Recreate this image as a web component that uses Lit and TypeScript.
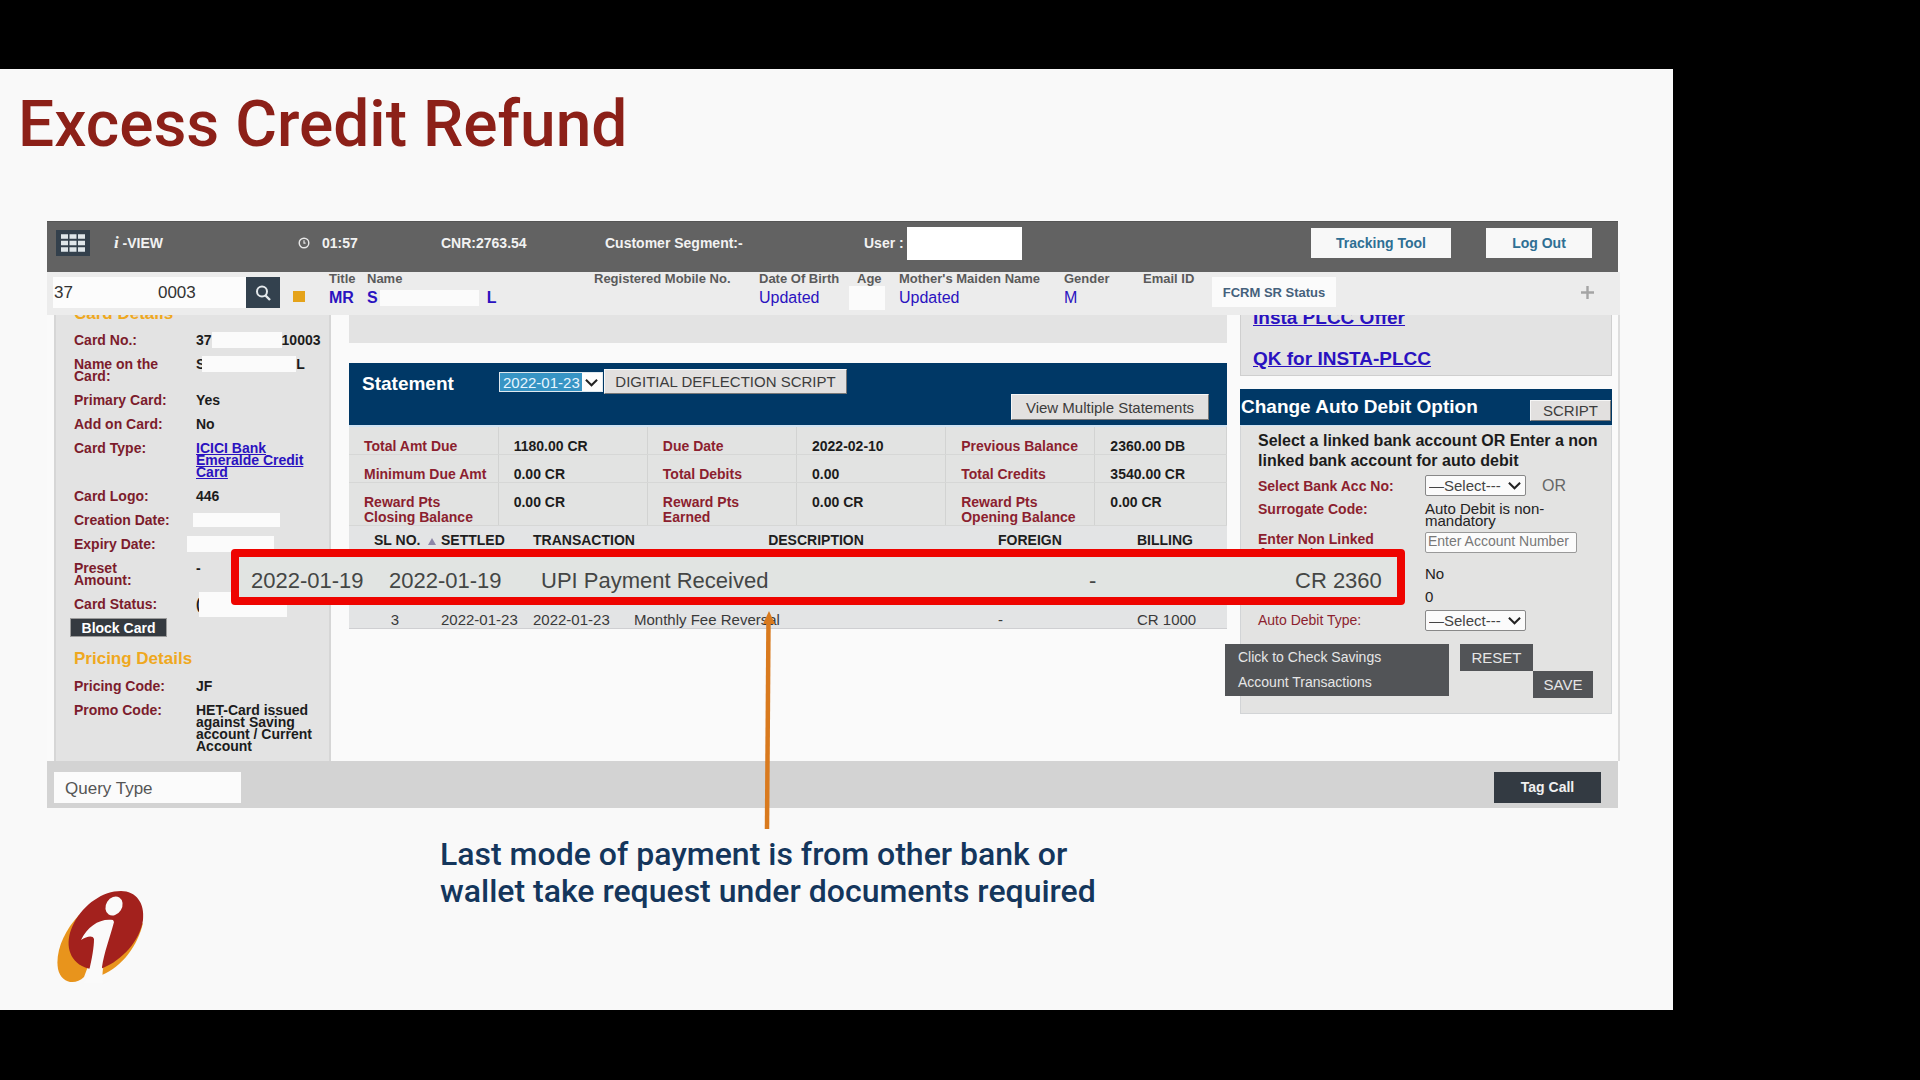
import { LitElement, html, css, nothing } from "lit";
import { customElement } from "lit/decorators.js";

const chevron = html`<svg class="chevron" viewBox="0 0 14 9" aria-hidden="true">
  <path d="M1 1.5 L7 7.5 L13 1.5" fill="none" stroke="#222" stroke-width="2.2" />
</svg>`;

const customerFields = [
  { label: "Title", cls: "f-title" },
  { label: "Name", cls: "f-name" },
  { label: "Registered Mobile No.", cls: "f-mobile" },
  { label: "Date Of Birth", cls: "f-dob" },
  { label: "Age", cls: "f-age" },
  { label: "Mother's Maiden Name", cls: "f-mother" },
  { label: "Gender", cls: "f-gender" },
  { label: "Email ID", cls: "f-email" },
];

const fieldValues: Record<string, unknown> = {
  "f-title": html`<b>MR</b>`,
  "f-name": html`<b>S</b><span class="mask mask-name"></span><b>L</b>`,
  "f-dob": "Updated",
  "f-age": html`<span class="mask mask-age"></span>`,
  "f-mother": "Updated",
  "f-gender": "M",
};

const summary = [
  ["Total Amt Due", "1180.00 CR", "Due Date", "2022-02-10", "Previous Balance", "2360.00 DB"],
  ["Minimum Due Amt", "0.00 CR", "Total Debits", "0.00", "Total Credits", "3540.00 CR"],
  ["Reward Pts\nClosing Balance", "0.00 CR", "Reward Pts\nEarned", "0.00 CR", "Reward Pts\nOpening Balance", "0.00 CR"],
];

@customElement("app-root")
export class AppRoot extends LitElement {
  static styles = css`
    :host {
      display: block;
      background: #000;
      font-family: "Liberation Sans", Arial, sans-serif;
      font-size: 14px;
      color: #222;
    }
    * { box-sizing: border-box; }
    button, input, select { font-family: inherit; margin: 0; border-radius: 0; }
    button { padding: 0; border: 0; }
    h1, h2, h3, p, dl, dd, dt { margin: 0; }

    .stage {
      min-height: 100vh;
      display: flex;
      padding: 69px 247px 70px 0;
    }
    .slide {
      flex: 1;
      min-width: 0;
      background: #f9f9f9;
      padding: 0 53px 0 47px;
      display: flex;
      flex-direction: column;
    }
    .title {
      margin: 16px 0 0 -29px;
      height: 136px;
      font: 500 64px/80px Roboto, "Liberation Sans", sans-serif;
      color: #8c2018;
    }

    .app { position: relative; background: #fafafa; }
    .topbar {
      height: 51px;
      background: #626262;
      border-top: 1px solid #555;
      display: grid;
      grid-template-columns: 58px 184px 143px 164px 259px 1fr 175px 106px;
      align-items: center;
      padding: 0 26px 8px 9px;
      color: #f2f2f2;
      font-weight: bold;
      margin-right: 2px;
    }
    .menu {
      width: 34px;
      height: 26px;
      background: #33404c;
      display: grid;
      place-items: center;
    }
    .menu svg { width: 26px; height: 18px; }
    .brand i { font-family: "Liberation Serif", serif; font-size: 17px; }
    .clock { display: flex; align-items: center; gap: 12px; }
    .clock svg { width: 12px; height: 12px; }
    .user { display: flex; align-items: center; gap: 3px; }
    .userbox { width: 115px; height: 33px; background: #fff; }
    .pill {
      height: 30px;
      width: 140px;
      background: #f8f8f8;
      color: #2f6f94;
      font-size: 14px;
      font-weight: bold;
    }
    .logout { width: 106px; }

    .infobar {
      height: 43px;
      background: #ececec;
      display: flex;
      padding-left: 6px;
      padding-right: 26px;
    }
    .search { display: flex; padding-top: 5px; width: 276px; }
    .search input {
      width: 193px;
      height: 31px;
      border: 0;
      padding: 0 1px;
      background: #fcfcfc;
      font-size: 17px;
      color: #333;
    }
    .search button {
      width: 34px;
      height: 31px;
      background: #33414e;
      display: grid;
      place-items: center;
    }
    .search svg { width: 18px; height: 18px; }
    .flag { width: 12px; height: 11px; margin: 14px 0 0 13px; background: #e5a31a; }
    .field b { color: #2a12c0; }
    .field { color: #2a12c0; font-size: 16px; }
    .field-label { display: block; font-size: 13px; font-weight: bold; line-height: 13px; color: #5a5a5a; white-space: nowrap; }
    .field-value { display: flex; align-items: center; height: 26px; }
    .f-title { width: 38px; }
    .f-name { width: 227px; }
    .f-mobile { width: 165px; }
    .f-dob { width: 98px; }
    .f-age { width: 42px; }
    .f-mother { width: 165px; }
    .f-gender { width: 79px; }
    .f-email { width: 69px; }
    .mask { background: #fbfbfb; display: inline-block; }
    .mask-name { width: 99px; height: 16px; margin: 0 8px 0 2px; }
    .mask-age { width: 36px; height: 24px; margin-left: -8px; }
    .fcrm {
      width: 124px;
      height: 30px;
      margin-top: 5px;
      background: #fbfbfb;
      font-size: 13px;
      font-weight: bold;
      color: #45617c;
    }
    .plus { width: 13px; height: 13px; margin: 14px 0 0 auto; }

    .workspace {
      display: grid;
      grid-template-columns: 277px minmax(0, 1fr) 372px;
      height: 446px;
      padding: 0 6px 0 7px;
      border-right: 2px solid #ddd;
    }
    .card {
      background: #e3e3e3;
      border-left: 2px solid #d6d6d6;
      border-right: 2px solid #d6d6d6;
      padding-left: 18px;
      overflow: hidden;
    }
    .section { font-size: 17px; line-height: 20px; color: #efa820; }
    .section-cut { margin: -11px 0 4px; }
    .section-next { margin: 12px 0 5px; }
    .row { display: grid; grid-template-columns: 122px 1fr; padding: 6px 0; line-height: 12px; font-weight: bold; }
    .row dt { color: #7c1c2c; max-width: 95px; white-space: nowrap; }
    .row .wrap { white-space: normal; }
    .row dd { color: #1c1c1c; max-width: 120px; display: flex; height: 12px; align-items: center; white-space: nowrap; }
    .row .long { display: block; height: auto; white-space: normal; }
    a { color: #2a12c0; }
    .mask-card { width: 70px; height: 16px; flex: none; }
    .mask-holder { width: 94px; height: 16px; flex: none; margin-left: -3px; }
    .mask-created { width: 87px; height: 14px; margin-left: -3px; }
    .mask-expiry { width: 87px; height: 16px; margin-left: -9px; }
    .mask-status { width: 88px; height: 25px; margin-left: -2px; }
    .block {
      display: block;
      width: 97px;
      height: 19px;
      margin: 2px 0 0 -4px;
      background: #353a40;
      border: 1px solid #9a9a9a;
      color: #fff;
      font-size: 14px;
      font-weight: bold;
      line-height: 16px;
    }

    .center { padding: 0 13px 0 18px; }
    .strip { height: 28px; background: #e3e3e3; }
    .st-head {
      margin-top: 20px;
      height: 64px;
      background: #003866;
      border-bottom: 2px solid #cfe2f2;
      display: flex;
      padding: 6px 18px 5px 13px;
      color: #fff;
    }
    .st-head h2 { width: 137px; font-size: 19px; line-height: 30px; }
    .pick { display: grid; align-items: center; }
    .pick select {
      grid-area: 1 / 1;
      appearance: none;
      width: 100%;
      height: 21px;
      padding: 0 3px;
      background: #fbfbfb;
      border: 1px solid #888;
      border-radius: 2px;
      font-size: 15px;
      color: #444;
    }
    .chevron { grid-area: 1 / 1; justify-self: end; width: 13px; height: 9px; margin-right: 5px; pointer-events: none; }
    .pick-date { width: 104px; height: 20px; margin: 3px 1px 0 0; }
    .pick-date select {
      border: 1px solid #dfe8ee;
      border-radius: 0;
      color: #e8f6ff;
      height: 20px;
      background: linear-gradient(90deg, #3794c4 82px, #fdfdfd 82px);
    }
    .pick-date option { color: #222; }
    .grey {
      background: #e2e0df;
      color: #3c3c3c;
      font-size: 15px;
      border: 1px solid #f6f6f6;
      border-right-color: #777;
      border-bottom-color: #777;
    }
    .deflect { width: 243px; height: 25px; }
    .multi { width: 198px; height: 26px; margin: auto 0 0 auto; }

    table { border-collapse: collapse; table-layout: fixed; width: 100%; background: #e2e3e2; }
    th, td { padding: 0; text-align: left; vertical-align: top; }
    .summary th, .summary td {
      border-right: 1px solid #d2d3d2;
      border-bottom: 1px solid #d6d7d6;
      padding: 12px 0 0 15px;
      font-weight: bold;
      line-height: 15px;
      color: #1c1c1c;
      white-space: pre-line;
    }
    .summary th { width: 17%; }
    .summary .amount { width: 17%; }
    .summary .last { width: 15%; }
    .summary .lab { color: #8c1f2f; }
    .tx { border-bottom: 1px solid #cfcfd2; background: #e3e4e5; }
    .tx thead tr { height: 28px; }
    .tx th { vertical-align: middle; font-size: 14px; color: #1e1e1e; white-space: nowrap; }
    .tx .first { padding-left: 25px; }
    .tx td { height: 22px; font-size: 15px; line-height: 16px; color: #3a3a3a; vertical-align: bottom; white-space: nowrap; }
    .tx .c { text-align: center; }
    .tx .hidden-row td { height: 52px; }
    .w1 { width: 92px; } .w2 { width: 92px; } .w3 { width: 101px; } .w5 { width: 139px; } .w6 { width: 90px; }
    .sort { width: 8px; height: 7px; margin-left: 8px; }

    .right { display: flex; flex-direction: column; }
    .links {
      height: 61px;
      overflow: hidden;
      background: #e3e3e3;
      border: 1px solid #cfcfcf;
      border-top: 0;
      padding-left: 12px;
      font-size: 19px;
      font-weight: bold;
    }
    .links a { display: block; line-height: 20px; }
    .links a:first-child { margin: -7px 0 21px; }
    .ad-head {
      margin-top: 13px;
      height: 37px;
      background: #003866;
      border-bottom: 1px solid #cfe2f2;
      color: #fff;
      display: flex;
      justify-content: space-between;
      padding: 0 1px;
    }
    .ad-head h2 { font-size: 19px; line-height: 36px; }
    .ad-head .grey { width: 81px; height: 21px; margin-top: 11px; }
    .ad-body { height: 288px; background: #e3e3e2; border: 1px solid #d2d4d6; border-top: 0; padding: 5px 0 0 17px; }
    .ad-body p { font-size: 16px; font-weight: bold; line-height: 20px; color: #1c1c1c; }
    .form {
      display: grid;
      grid-template-columns: 167px 1fr;
      grid-template-rows: 29px 30px 32px 23px 23px 24px;
      line-height: 12px;
    }
    .form > * { align-self: center; }
    .form .top { align-self: start; padding-top: 3px; }
    .form label, .form .lab { color: #8c1f2f; font-weight: bold; }
    .form .short { max-width: 125px; line-height: 14px; padding-top: 2px; }
    .form .light { font-weight: normal; }
    .form .val { font-size: 15px; max-width: 130px; }
    .inline { display: flex; align-items: center; gap: 16px; font-size: 16px; color: #666; }
    .pick-sel { width: 101px; height: 21px; }
    .form .acct { width: 152px; height: 21px; align-self: start; margin-top: 2px; border: 1px solid #999; border-radius: 2px; background: #fbfbfb; font-size: 14px; padding: 0 2px 4px; }
    .acct::placeholder { color: #777; opacity: 1; }
    .actions { display: flex; align-items: flex-start; margin: 12px 0 0 -33px; }
    .dark { position: relative; z-index: 1; background: #525457; color: #e6e6e6; font-size: 15px; }
    .check { width: 224px; height: 52px; margin-right: 11px; padding-left: 13px; text-align: left; line-height: 25px; font-size: 14px; }
    .reset { width: 73px; height: 27px; }
    .save { width: 60px; height: 27px; margin-top: 27px; }

    .footer {
      height: 47px;
      margin-right: 2px;
      background: #d3d3d3;
      display: flex;
      justify-content: space-between;
      align-items: center;
      padding: 5px 17px 0 7px;
    }
    .query { width: 187px; height: 31px; border: 0; background: #fbfbfb; padding: 4px 11px 0; font-size: 17px; color: #555; }
    .query::placeholder { color: #555; opacity: 1; }
    .tag { width: 107px; height: 31px; background: #333a42; color: #f0f0f0; font-size: 14px; font-weight: bold; }

    .callout {
      position: absolute;
      z-index: 2;
      top: 328px;
      left: 184px;
      right: 215px;
      height: 56px;
      border: 8px solid #ee0400;
      border-radius: 4px;
      background: #e1e4e2;
      display: grid;
      grid-template-columns: 138px 152px 1fr 206px 86px;
      align-items: center;
      padding: 8px 16px 0 12px;
      font-size: 22px;
      color: #444645;
      white-space: nowrap;
    }
    .arrow { position: absolute; z-index: 3; top: 389px; left: 710px; width: 24px; height: 221px; }

    .caption {
      margin: 28px 0 0 393px;
      font: 500 32px/37px Roboto, "Liberation Sans", sans-serif;
      color: #14365c;
      white-space: nowrap;
    }
    .logo { width: 90px; height: 96px; margin: auto 0 25px 9px; }
    .foot-brand { flex: 1; display: flex; align-items: flex-end; margin-top: -30px; }
  `;

  private row(label: string, value: unknown, long = false) {
    return html`<div class="row">
      <dt class=${label.startsWith("Name") || label.startsWith("Preset") ? "wrap" : ""}>${label}</dt>
      <dd class=${long ? "long" : ""}>${value}</dd>
    </div>`;
  }

  render() {
    return html`
      <div class="stage">
        <main class="slide">
          <h1 class="title">Excess Credit Refund</h1>
          <section class="app">
            ${this.topbar()} ${this.infobar()}
            <div class="workspace">${this.cardPanel()} ${this.statement()} ${this.rightPanel()}</div>
            <div class="footer">
              <input class="query" aria-label="Query Type" placeholder="Query Type" />
              <button class="tag">Tag Call</button>
            </div>
            <div class="callout">
              <span>2022-01-19</span>
              <span>2022-01-19</span>
              <span>UPI Payment Received</span>
              <span>-</span>
              <span>CR 2360</span>
            </div>
            <svg class="arrow" viewBox="0 0 24 221" aria-hidden="true">
              <path d="M11.5 10 L10 219" stroke="#d97a1e" stroke-width="4.5" fill="none" />
              <path d="M12 1 L18 14 L6 14 Z" fill="#d97a1e" />
            </svg>
          </section>
          <p class="caption">Last mode of payment is from other bank or<br />wallet take request under documents required</p>
          <div class="foot-brand">
            <svg class="logo" viewBox="0 0 90 96" role="img" aria-label="Bank logo">
              <path d="M23 26 C8 42 -1 63 2 80 C5 94 19 97 28 88 L34 72 Z" fill="#e8941c" />
              <path d="M46 86 C66 78 82 56 87 34 L50 62 Z" fill="#e8941c" />
              <path d="M65 2 C80 2 89 14 87 31 C84 52 66 71 47 79 C42 81 33 81 26 77 C11 69 9 51 18 34 C28 15 47 2 65 2 Z" fill="#a3211d" />
              <ellipse cx="58" cy="17" rx="8" ry="10" transform="rotate(32 58 17)" fill="#fafafa" />
              <path d="M57 31 C44 29 32 37 25 51 C31 47 37 46 38 50 C38 58 36 70 33 82 L28 94 L47 94 L46 78 C48 64 54 48 58 33 Z" fill="#fafafa" />
            </svg>
          </div>
        </main>
      </div>
    `;
  }

  private topbar() {
    return html`<header class="topbar">
      <button class="menu" aria-label="Menu">
        <svg viewBox="0 0 26 18">
          <path d="M1 2.5 H25 M1 9 H25 M1 15.5 H25" stroke="#dfe6ea" stroke-width="4.6" stroke-dasharray="7 1.5" />
        </svg>
      </button>
      <span class="brand"><i>i</i> -VIEW</span>
      <span class="clock">
        <svg viewBox="0 0 12 12"><circle cx="6" cy="6" r="4.8" fill="none" stroke="#e8e8e8" stroke-width="1.4" /><path d="M6 3.2 V6.2 H7.6" fill="none" stroke="#e8e8e8" stroke-width="1.2" /></svg>
        01:57
      </span>
      <span>CNR:2763.54</span>
      <span>Customer Segment:-</span>
      <span class="user">User : <span class="userbox"></span></span>
      <button class="pill">Tracking Tool</button>
      <button class="pill logout">Log Out</button>
    </header>`;
  }

  private infobar() {
    return html`<div class="infobar">
      <div class="search">
        <input aria-label="Card number" .value=${"37" + " ".repeat(18) + "0003"} />
        <button aria-label="Search">
          <svg viewBox="0 0 18 18"><circle cx="8" cy="7.5" r="5" fill="none" stroke="#e4e9ec" stroke-width="2" /><path d="M11.5 11.5 L16 16" stroke="#e4e9ec" stroke-width="2.4" /></svg>
        </button>
        <span class="flag"></span>
      </div>
      ${customerFields.map(
        (f) => html`<div class="field ${f.cls}">
          <span class="field-label">${f.label}</span>
          <span class="field-value">${fieldValues[f.cls] ?? nothing}</span>
        </div>`
      )}
      <button class="fcrm">FCRM SR Status</button>
      <svg class="plus" viewBox="0 0 13 13"><path d="M6.5 0 V13 M0 6.5 H13" stroke="#a4a4a4" stroke-width="2.4" /></svg>
    </div>`;
  }

  private cardPanel() {
    const mask = (cls: string) => html`<span class="mask ${cls}"></span>`;
    return html`<aside class="card">
      <h3 class="section section-cut">Card Details</h3>
      <dl>
        ${this.row("Card No.:", html`37${mask("mask-card")}10003`)}
        ${this.row("Name on the Card:", html`S${mask("mask-holder")}L`)}
        ${this.row("Primary Card:", "Yes")} ${this.row("Add on Card:", "No")}
        ${this.row("Card Type:", html`<a href="#">ICICI Bank Emeralde Credit Card</a>`, true)}
        ${this.row("Card Logo:", "446")} ${this.row("Creation Date:", mask("mask-created"))}
        ${this.row("Expiry Date:", mask("mask-expiry"))} ${this.row("Preset Amount:", "-")}
        ${this.row("Card Status:", html`(${mask("mask-status")}`)}
      </dl>
      <button class="block">Block Card</button>
      <h3 class="section section-next">Pricing Details</h3>
      <dl>
        ${this.row("Pricing Code:", "JF")}
        ${this.row("Promo Code:", "HET-Card issued against Saving account / Current Account", true)}
      </dl>
    </aside>`;
  }

  private statement() {
    return html`<section class="center">
      <div class="strip"></div>
      <div class="st-head">
        <h2>Statement</h2>
        <div class="pick pick-date">
          <select aria-label="Statement date"><option>2022-01-23</option></select>${chevron}
        </div>
        <button class="grey deflect">DIGITIAL DEFLECTION SCRIPT</button>
        <button class="grey multi">View Multiple Statements</button>
      </div>
      <table class="summary">
        <tbody>
          ${summary.map(
            (r) => html`<tr>${r.map((v, i) => (i % 2 ? html`<td class=${i === 5 ? "last" : "amount"}>${v}</td>` : html`<th scope="row" class="lab">${v}</th>`))}</tr>`
          )}
        </tbody>
      </table>
      <table class="tx">
        <colgroup><col class="w1" /><col class="w2" /><col class="w3" /><col /><col class="w5" /><col class="w6" /></colgroup>
        <thead>
          <tr>
            <th class="first">SL NO.<svg class="sort" viewBox="0 0 8 7"><path d="M4 0 L8 7 H0 Z" fill="#8d86a8" /></svg></th>
            <th>SETTLED</th><th>TRANSACTION</th><th class="c">DESCRIPTION</th><th>FOREIGN</th><th>BILLING</th>
          </tr>
        </thead>
        <tbody>
          <tr class="hidden-row"><td colspan="6"></td></tr>
          <tr>
            <td class="c">3</td><td>2022-01-23</td><td>2022-01-23</td><td>Monthly Fee Reversal</td><td>-</td><td>CR 1000</td>
          </tr>
        </tbody>
      </table>
    </section>`;
  }

  private rightPanel() {
    return html`<section class="right">
      <nav class="links"><a href="#">Insta PLCC Offer</a><a href="#">QK for INSTA-PLCC</a></nav>
      <div class="ad-head"><h2>Change Auto Debit Option</h2><button class="grey">SCRIPT</button></div>
      <div class="ad-body">
        <p>Select a linked bank account OR Enter a non linked bank account for auto debit</p>
        <div class="form">
          <label for="bank">Select Bank Acc No:</label>
          <div class="inline">
            <div class="pick pick-sel"><select id="bank"><option>—Select---</option></select>${chevron}</div>
            <span>OR</span>
          </div>
          <span class="lab top">Surrogate Code:</span>
          <span class="val top">Auto Debit is non-mandatory</span>
          <label for="acct" class="top short">Enter Non Linked Account:</label>
          <input id="acct" class="acct" placeholder="Enter Account Number" />
          <span></span><span class="val">No</span>
          <span></span><span class="val">0</span>
          <label for="type" class="light">Auto Debit Type:</label>
          <div class="pick pick-sel"><select id="type"><option>—Select---</option></select>${chevron}</div>
        </div>
        <div class="actions">
          <button class="dark check">Click to Check Savings<br />Account Transactions</button>
          <button class="dark reset">RESET</button>
          <button class="dark save">SAVE</button>
        </div>
      </div>
    </section>`;
  }
}
